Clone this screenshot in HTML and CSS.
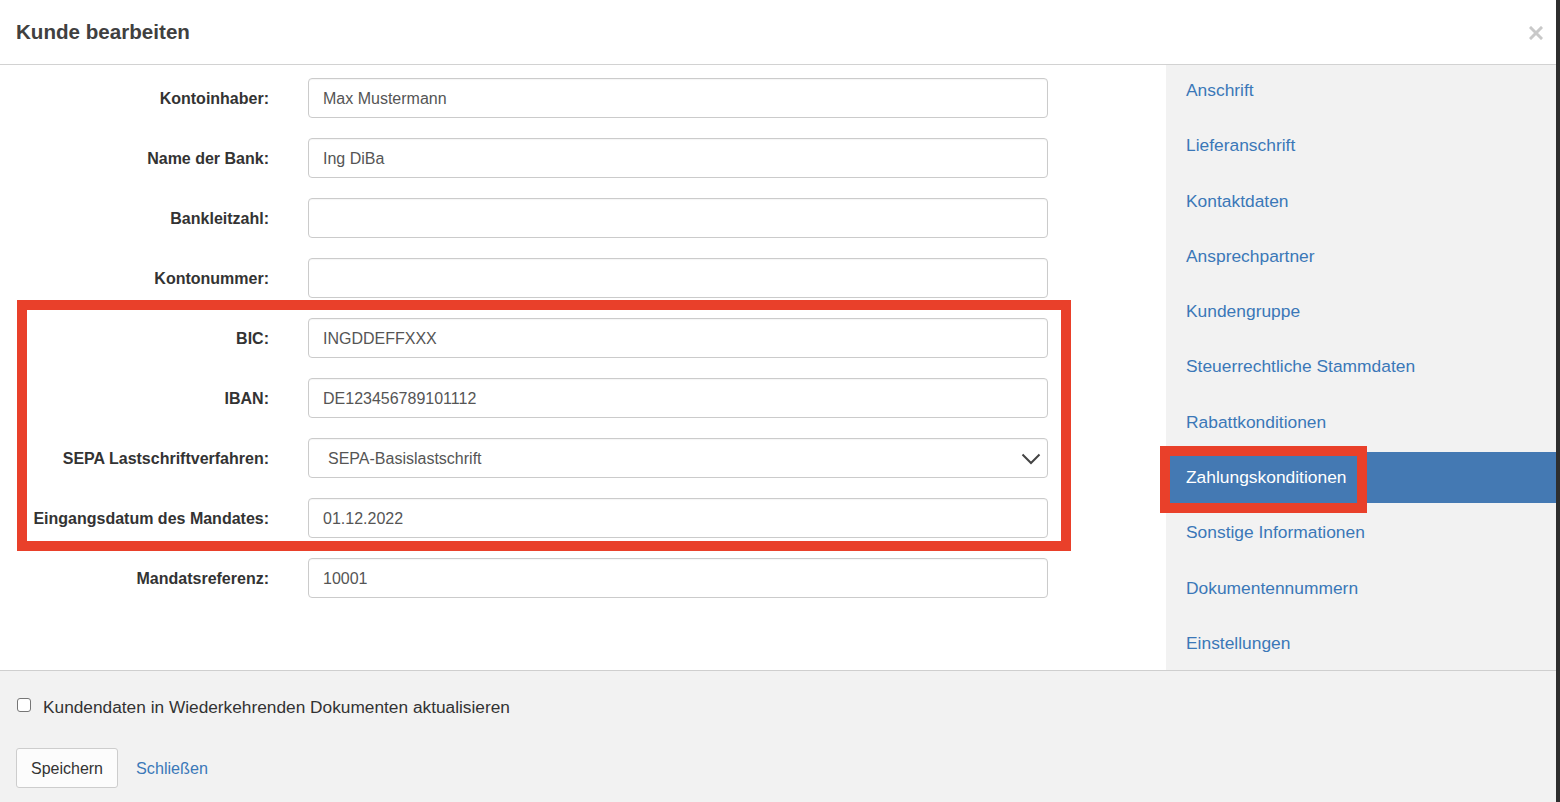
FILE: index.html
```html
<!DOCTYPE html>
<html lang="de">
<head>
<meta charset="utf-8">
<title>Kunde bearbeiten</title>
<link rel="stylesheet" href="styles.css">
</head>
<body>
<div class="modal">
  <div class="modal-header">
    <h4 class="title">Kunde bearbeiten</h4>
    <span class="close"><svg width="14" height="14" viewBox="0 0 14 14"><path d="M2 2 L12 12 M12 2 L2 12" stroke="#c9c9c9" stroke-width="3" stroke-linecap="square"/></svg></span>
  </div>
  <div class="modal-body">
    <div class="form">
      <div class="row"><label class="lbl">Kontoinhaber:</label><div class="input">Max Mustermann</div></div>
      <div class="row"><label class="lbl">Name der Bank:</label><div class="input">Ing DiBa</div></div>
      <div class="row"><label class="lbl">Bankleitzahl:</label><div class="input"></div></div>
      <div class="row"><label class="lbl">Kontonummer:</label><div class="input"></div></div>
      <div class="row"><label class="lbl">BIC:</label><div class="input">INGDDEFFXXX</div></div>
      <div class="row"><label class="lbl">IBAN:</label><div class="input">DE123456789101112</div></div>
      <div class="row"><label class="lbl">SEPA Lastschriftverfahren:</label><div class="input select"><span>SEPA-Basislastschrift</span><svg class="chev" width="20" height="12" viewBox="0 0 20 12"><path d="M1.5 1.5 L10 10 L18.5 1.5" fill="none" stroke="#444" stroke-width="2"/></svg></div></div>
      <div class="row"><label class="lbl">Eingangsdatum des Mandates:</label><div class="input">01.12.2022</div></div>
      <div class="row"><label class="lbl">Mandatsreferenz:</label><div class="input">10001</div></div>
      <div class="highlight form-highlight"></div>
    </div>
    <ul class="nav">
      <li><a>Anschrift</a></li>
      <li><a>Lieferanschrift</a></li>
      <li><a>Kontaktdaten</a></li>
      <li><a>Ansprechpartner</a></li>
      <li><a>Kundengruppe</a></li>
      <li><a>Steuerrechtliche Stammdaten</a></li>
      <li><a>Rabattkonditionen</a></li>
      <li class="active"><a>Zahlungskonditionen</a><div class="highlight nav-highlight"></div></li>
      <li><a>Sonstige Informationen</a></li>
      <li><a>Dokumentennummern</a></li>
      <li><a>Einstellungen</a></li>
    </ul>
  </div>
  <div class="modal-footer">
    <label class="check"><span class="box"></span>Kundendaten in Wiederkehrenden Dokumenten aktualisieren</label>
    <div class="actions">
      <button class="btn">Speichern</button>
      <a class="link">Schließen</a>
    </div>
  </div>
</div>
</body>
</html>
```

FILE: styles.css
```css
html, body {
  margin: 0;
  padding: 0;
  height: 100%;
  overflow: hidden;
}
body {
  background: #2e2e2e;
  font-family: "Liberation Sans", Arial, sans-serif;
  color: #333;
}
.modal {
  width: 1556px;
  height: 802px;
  background: #fff;
  display: flex;
  flex-direction: column;
}
.modal-header {
  height: 64px;
  border-bottom: 1px solid #d2d2d2;
  display: flex;
  align-items: center;
  justify-content: space-between;
  padding: 0 13px 0 16px;
  box-sizing: content-box;
}
.title {
  margin: 0;
  font-size: 20.6px;
  font-weight: bold;
  color: #404040;
}
.close {
  display: flex;
  margin-top: 2px;
}
.modal-body {
  display: flex;
  height: 605px;
}
.form {
  position: relative;
  width: 1166px;
  padding-top: 13px;
  display: flex;
  flex-direction: column;
  gap: 20px;
}
.row {
  display: flex;
  align-items: center;
  height: 40px;
}
.lbl {
  width: 269px;
  text-align: right;
  font-weight: bold;
  font-size: 16px;
  color: #333;
  margin-right: 39px;
  padding-top: 2px;
}
.input {
  width: 740px;
  height: 40px;
  box-sizing: border-box;
  border: 1px solid #cbcbcb;
  border-radius: 4px;
  padding: 2px 14px 0;
  display: flex;
  align-items: center;
  font-size: 16px;
  color: #555;
  box-shadow: inset 0 1px 1px rgba(0,0,0,0.04);
}
.select {
  justify-content: space-between;
  padding-left: 19px;
  padding-right: 6px;
}
.chev {
  margin-top: -1px;
}
.highlight {
  position: absolute;
  border: 10px solid #e9402a;
  box-sizing: border-box;
  pointer-events: none;
}
.form-highlight {
  left: 17px;
  top: 235px;
  width: 1054px;
  height: 251px;
}
.nav {
  list-style: none;
  margin: 0;
  padding: 0;
  flex: 1;
  background: #f2f2f2;
  display: flex;
  flex-direction: column;
  gap: 4.3px;
}
.nav li {
  position: relative;
  height: 51px;
  display: flex;
  align-items: center;
}
.nav a {
  padding-left: 20px;
  font-size: 17.4px;
  color: #3b78b8;
}
.nav li.active {
  background: #4479b3;
}
.nav li.active a {
  color: #fff;
}
.nav-highlight {
  left: -6px;
  top: -6px;
  width: 207px;
  height: 67px;
}
.modal-footer {
  flex: 1;
  background: #f2f2f2;
  border-top: 1px solid #cfcfcf;
  padding: 24px 16px 0 16px;
}
.check {
  display: flex;
  align-items: center;
  font-size: 17.3px;
  color: #333;
  height: 24px;
}
.box {
  width: 14px;
  height: 14px;
  box-sizing: border-box;
  border: 1px solid #767676;
  border-radius: 3px;
  background: #fff;
  margin: -5px 12px 0 1px;
}
.actions {
  margin-top: 29px;
  display: flex;
  align-items: center;
  gap: 18px;
}
.btn {
  height: 40px;
  width: 102px;
  border: 1px solid #cdcdcd;
  border-radius: 3px;
  background: #fcfcfc;
  font-family: "Liberation Sans", Arial, sans-serif;
  font-size: 16px;
  color: #333;
  padding: 1px 0 0;
}
.link {
  font-size: 16.2px;
  color: #3b78b8;
}
```
